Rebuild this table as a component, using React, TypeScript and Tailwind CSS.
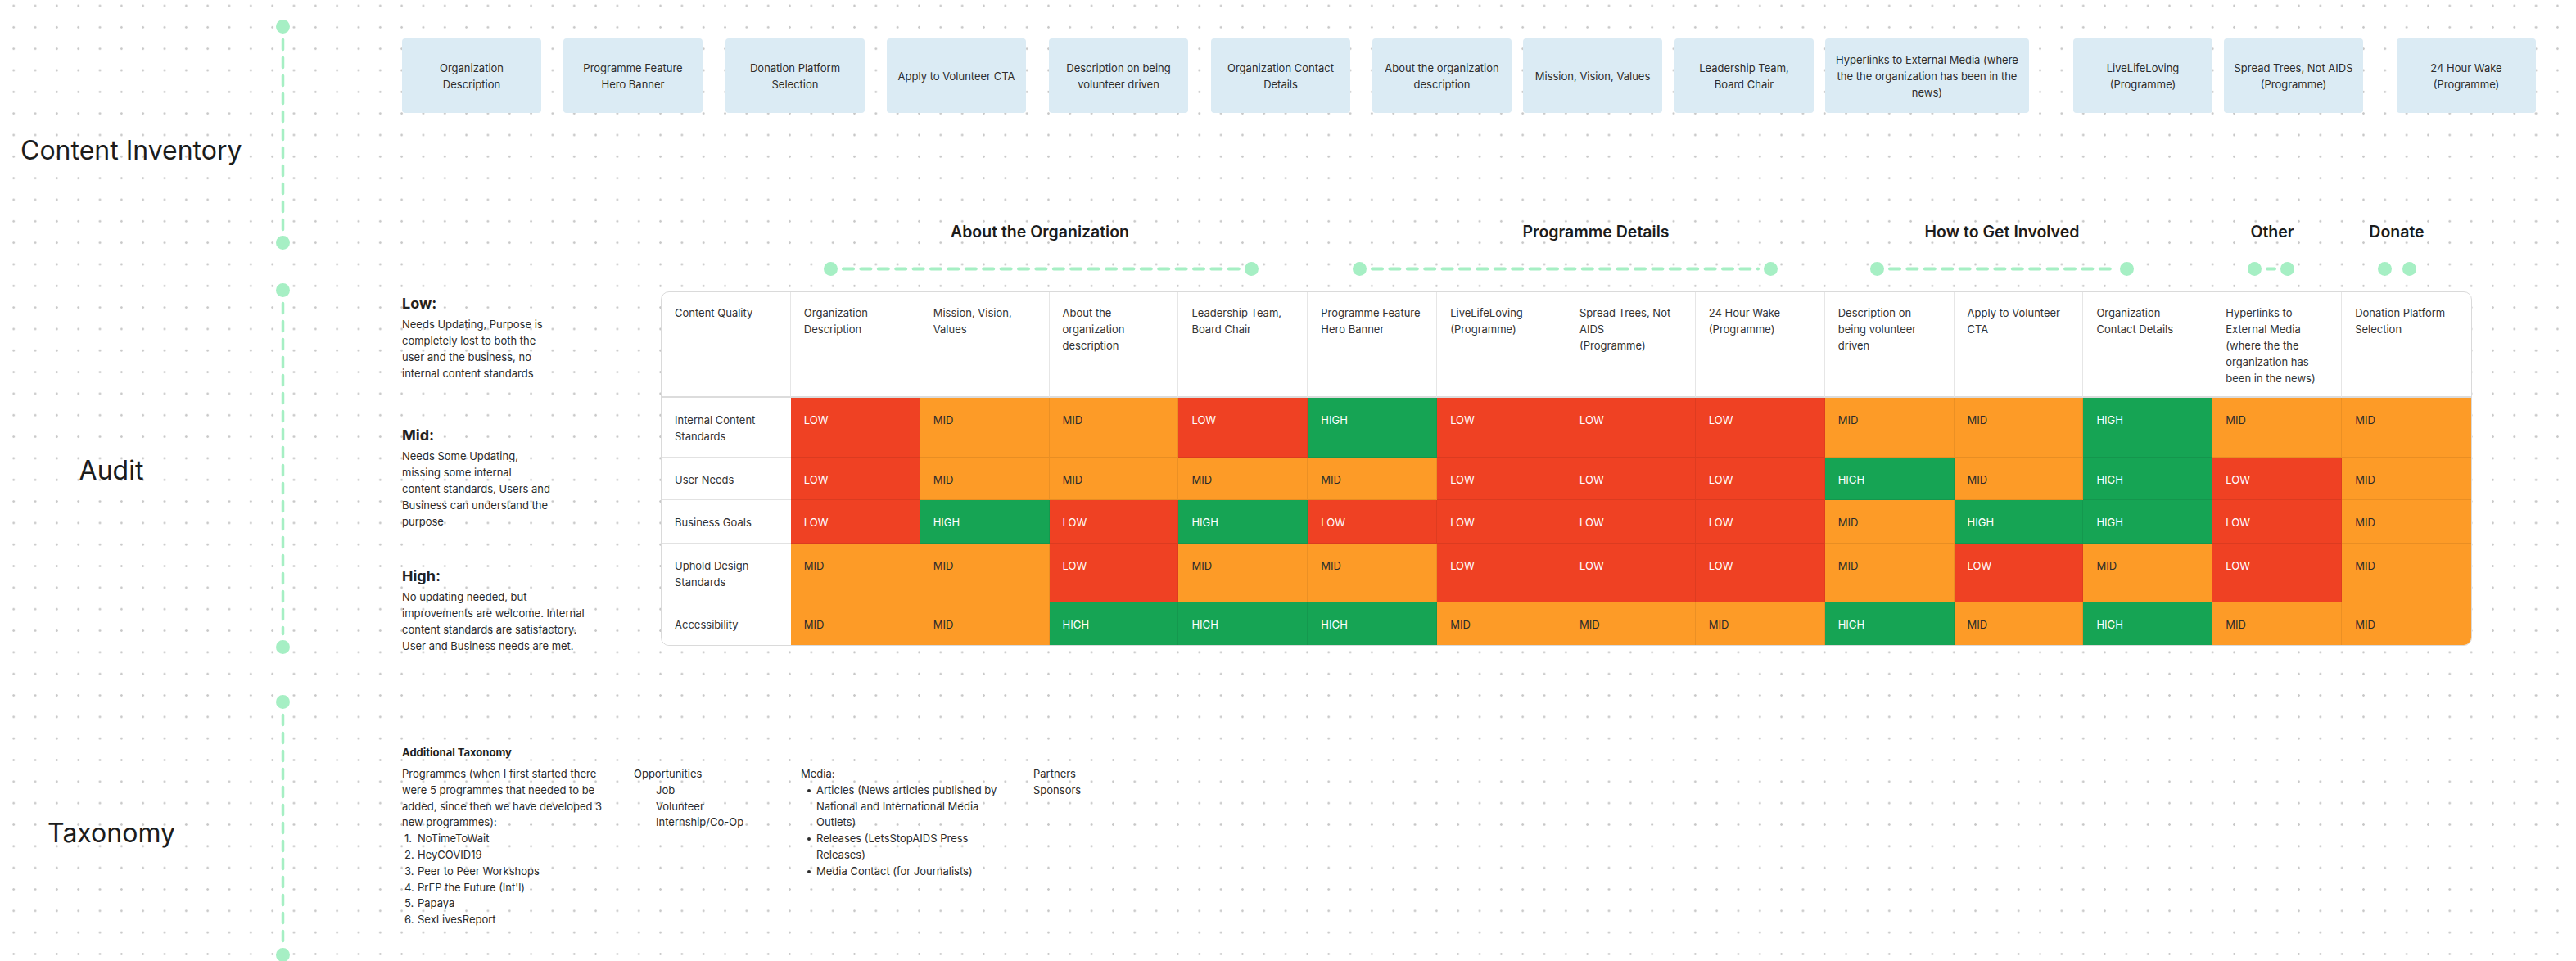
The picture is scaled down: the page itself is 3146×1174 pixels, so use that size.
import React from "react";

const GREEN = "#a6efc4";

function Dot() {
  return <div className="w-[17px] h-[17px] rounded-full bg-[#a6efc4] shrink-0" />;
}

function VSeg({ h }: { h: number }) {
  const L = h - 34;
  return (
    <div className="flex flex-col items-center">
      <Dot />
      <svg width={17} height={L} className="shrink-0">
        <line x1={8.5} y1={7.5} x2={8.5} y2={L - 7.5} stroke={GREEN} strokeWidth={3.5} strokeLinecap="round" strokeDasharray="12 10" />
      </svg>
      <Dot />
    </div>
  );
}

function HLine({ w }: { w: number }) {
  return (
    <svg width={w} height={17} className="shrink-0">
      {w > 14 ? (
        <line x1={7} y1={8.5} x2={w - 7} y2={8.5} stroke={GREEN} strokeWidth={4} strokeLinecap="round" strokeDasharray="12 9.4" />
      ) : null}
    </svg>
  );
}

function Box({ lines, cls }: { lines: string[]; cls: string }) {
  return (
    <div className={`h-[91px] shrink-0 rounded-[4px] bg-[#dbebf4] flex items-center justify-center text-center text-[13px] leading-[20px] text-[#2d2d2d] whitespace-nowrap ${cls}`}>
      <div>
        {lines.map((l, i) => (
          <div key={i}>{l}</div>
        ))}
      </div>
    </div>
  );
}

const cols: string[][] = [
  ["Organization", "Description"],
  ["Mission, Vision,", "Values"],
  ["About the", "organization", "description"],
  ["Leadership Team,", "Board Chair"],
  ["Programme Feature", "Hero Banner"],
  ["LiveLifeLoving", "(Programme)"],
  ["Spread Trees, Not", "AIDS", "(Programme)"],
  ["24 Hour Wake", "(Programme)"],
  ["Description on", "being volunteer", "driven"],
  ["Apply to Volunteer", "CTA"],
  ["Organization", "Contact Details"],
  ["Hyperlinks to", "External Media", "(where the the", "organization has", "been in the news)"],
  ["Donation Platform", "Selection"],
];

const rows: { label: string[]; vals: string }[] = [
  { label: ["Internal Content", "Standards"], vals: "LMMLHLLLMMHMM" },
  { label: ["User Needs"], vals: "LMMMMLLLHMHLM" },
  { label: ["Business Goals"], vals: "LHLHLLLLMHHLM" },
  { label: ["Uphold Design", "Standards"], vals: "MMLMMLLLMLMLM" },
  { label: ["Accessibility"], vals: "MMHHHMMMHMHMM" },
];

const valCls: Record<string, string> = {
  L: "bg-[#ef4123] text-white",
  M: "bg-[#fd9b27] text-[#2b2b2b]",
  H: "bg-[#16a454] text-white",
};
const valTxt: Record<string, string> = { L: "LOW", M: "MID", H: "HIGH" };

function AuditTable() {
  return (
    <div className="w-[2212px] h-[433px] shrink-0 rounded-[10px] border border-[#dadada] overflow-hidden bg-white grid grid-cols-[repeat(14,minmax(0,1fr))] grid-rows-[129px_73px_52px_53px_72px_52px] text-[13px] leading-[20px] whitespace-nowrap">
      <div className="px-4 pt-[15px] text-[#333] border-r border-b-2 border-r-[#e6e6e6] border-b-[#dcdcdc]">Content Quality</div>
      {cols.map((c, i) => (
        <div
          key={i}
          className={`px-4 pt-[15px] text-[#333] border-b-2 border-b-[#dcdcdc] ${i === cols.length - 1 ? "" : "border-r border-r-[#e6e6e6]"}`}
        >
          {c.map((l, j) => (
            <div key={j}>{l}</div>
          ))}
        </div>
      ))}
      {rows.map((r, ri) => {
        const lastRow = ri === rows.length - 1;
        return (
          <React.Fragment key={ri}>
            <div className={`px-4 pt-[17px] text-[#333] bg-white ${lastRow ? "" : "border-b border-b-[#e2e2e2]"}`}>
              {r.label.map((l, j) => (
                <div key={j}>{l}</div>
              ))}
            </div>
            {r.vals.split("").map((v, ci) => (
              <div
                key={ci}
                className={`px-4 pt-[17px] ${valCls[v]} ${ci === 12 ? "" : "border-r border-r-black/[0.07]"} ${lastRow ? "" : "border-b border-b-black/[0.08]"}`}
              >
                {valTxt[v]}
              </div>
            ))}
          </React.Fragment>
        );
      })}
    </div>
  );
}

function Legend() {
  return (
    <div className="w-[316px] h-[433px] shrink-0 flex flex-col text-[#222] whitespace-nowrap">
      <div className="mt-[4px] text-[18px] leading-[22px] font-bold">Low:</div>
      <div className="mt-[4px] text-[13px] leading-[20px] text-[#2b2b2b]">
        Needs Updating, Purpose is<br />
        completely lost to both the<br />
        user and the business, no<br />
        internal content standards
      </div>
      <div className="mt-[55px] text-[18px] leading-[22px] font-bold">Mid:</div>
      <div className="mt-[4px] text-[13px] leading-[20px] text-[#2b2b2b]">
        Needs Some Updating,<br />
        missing some internal<br />
        content standards, Users and<br />
        Business can understand the<br />
        purpose
      </div>
      <div className="mt-[46px] text-[18px] leading-[22px] font-bold">High:</div>
      <div className="mt-[4px] text-[13px] leading-[20px] text-[#2b2b2b]">
        No updating needed, but<br />
        improvements are welcome. Internal<br />
        content standards are satisfactory.<br />
        User and Business needs are met.
      </div>
    </div>
  );
}

function Taxonomy() {
  const progs = ["NoTimeToWait", "HeyCOVID19", "Peer to Peer Workshops", "PrEP the Future (Int'l)", "Papaya", "SexLivesReport"];
  const media: string[][] = [
    ["Articles (News articles published by", "National and International Media", "Outlets)"],
    ["Releases (LetsStopAIDS Press", "Releases)"],
    ["Media Contact (for Journalists)"],
  ];
  return (
    <div className="mt-[120px] text-[13px] leading-[19.8px] text-[#2b2b2b] whitespace-nowrap">
      <div className="font-bold leading-[20px] text-[#1e1e1e]">Additional Taxonomy</div>
      <div className="mt-[7px] flex">
        <div className="w-[283px] shrink-0">
          <div>Programmes (when I first started there</div>
          <div>were 5 programmes that needed to be</div>
          <div>added, since then we have developed 3</div>
          <div>new programmes):</div>
          {progs.map((p, i) => (
            <div key={i} className="flex">
              <span className="w-[19px] pl-[3px] shrink-0">{i + 1}.</span>
              <span>{p}</span>
            </div>
          ))}
        </div>
        <div className="w-[204px] shrink-0">
          <div>Opportunities</div>
          <div className="pl-[27px]">Job</div>
          <div className="pl-[27px]">Volunteer</div>
          <div className="pl-[27px]">Internship/Co-Op</div>
        </div>
        <div className="w-[284px] shrink-0">
          <div>Media:</div>
          {media.map((m, i) => (
            <div key={i} className="flex">
              <span className="mt-[8px] ml-[8px] mr-[7px] w-[4px] h-[4px] rounded-full bg-[#2b2b2b] shrink-0" />
              <div>
                {m.map((l, j) => (
                  <div key={j}>{l}</div>
                ))}
              </div>
            </div>
          ))}
        </div>
        <div>
          <div>Partners</div>
          <div>Sponsors</div>
        </div>
      </div>
    </div>
  );
}

export default function App() {
  return (
    <div className="relative w-[3146px] h-[1174px] overflow-hidden bg-white bg-[image:radial-gradient(circle,#c8c8c8_1px,transparent_1.6px)] bg-[length:26.33px_26.33px] bg-[position:3.55px_-6.15px] [font-family:Inter,'Noto_Sans',sans-serif] text-[#222]">
      <div className="flex">
        {/* Section labels */}
        <div className="w-[337px] shrink-0 flex flex-col text-[32px] leading-[40px] text-[#1c1c1c]">
          <div className="mt-[164px] pl-[25px] whitespace-nowrap">Content Inventory</div>
          <div className="mt-[351px] w-[272px] text-center">Audit</div>
          <div className="mt-[403px] w-[272px] text-center">Taxonomy</div>
        </div>

        {/* Timeline */}
        <div className="w-[17px] shrink-0 flex flex-col pt-[24px]">
          <VSeg h={281} />
          <div className="mt-[41px]">
            <VSeg h={453} />
          </div>
          <div className="mt-[50px]">
            <VSeg h={326} />
          </div>
        </div>

        {/* Content */}
        <div className="ml-[137px] flex flex-col">
          {/* Inventory boxes */}
          <div className="mt-[47px] flex">
            <Box cls="w-[170px]" lines={["Organization", "Description"]} />
            <Box cls="w-[170px] ml-[27px]" lines={["Programme Feature", "Hero Banner"]} />
            <Box cls="w-[170px] ml-[28px]" lines={["Donation Platform", "Selection"]} />
            <Box cls="w-[170px] ml-[27px]" lines={["Apply to Volunteer CTA"]} />
            <Box cls="w-[170px] ml-[28px]" lines={["Description on being", "volunteer driven"]} />
            <Box cls="w-[170px] ml-[28px]" lines={["Organization Contact", "Details"]} />
            <Box cls="w-[170px] ml-[27px]" lines={["About the organization", "description"]} />
            <Box cls="w-[170px] ml-[14px]" lines={["Mission, Vision, Values"]} />
            <Box cls="w-[170px] ml-[15px]" lines={["Leadership Team,", "Board Chair"]} />
            <Box cls="w-[249px] ml-[14px]" lines={["Hyperlinks to External Media (where", "the the organization has been in the", "news)"]} />
            <Box cls="w-[170px] ml-[54px]" lines={["LiveLifeLoving", "(Programme)"]} />
            <Box cls="w-[170px] ml-[14px]" lines={["Spread Trees, Not AIDS", "(Programme)"]} />
            <Box cls="w-[170px] ml-[41px]" lines={["24 Hour Wake", "(Programme)"]} />
          </div>

          {/* Group headers */}
          <div className="mt-[133px] flex h-[24px] text-[19.5px] leading-[24px] font-semibold text-[#1c1c1c] whitespace-nowrap">
            <div className="ml-[629px] w-[300px] text-center shrink-0">About the Organization</div>
            <div className="ml-[379px] w-[300px] text-center shrink-0">Programme Details</div>
            <div className="ml-[196px] w-[300px] text-center shrink-0">How to Get Involved</div>
            <div className="ml-[105px] w-[150px] text-center shrink-0">Other</div>
            <div className="ml-[2px] w-[150px] text-center shrink-0">Donate</div>
          </div>

          {/* Group connectors */}
          <div className="mt-[25px] flex h-[17px]">
            <div className="ml-[515px] flex items-center shrink-0">
              <Dot />
              <HLine w={497} />
              <Dot />
            </div>
            <div className="ml-[115px] flex items-center shrink-0">
              <Dot />
              <HLine w={485} />
              <Dot />
            </div>
            <div className="ml-[113px] flex items-center shrink-0">
              <Dot />
              <HLine w={288} />
              <Dot />
            </div>
            <div className="ml-[139px] flex items-center shrink-0">
              <Dot />
              <HLine w={23} />
              <Dot />
            </div>
            <div className="ml-[102px] flex items-center shrink-0">
              <Dot />
              <HLine w={13} />
              <Dot />
            </div>
          </div>

          {/* Audit: legend + table */}
          <div className="mt-[19px] flex h-[433px]">
            <Legend />
            <AuditTable />
          </div>

          <Taxonomy />
        </div>
      </div>
    </div>
  );
}
